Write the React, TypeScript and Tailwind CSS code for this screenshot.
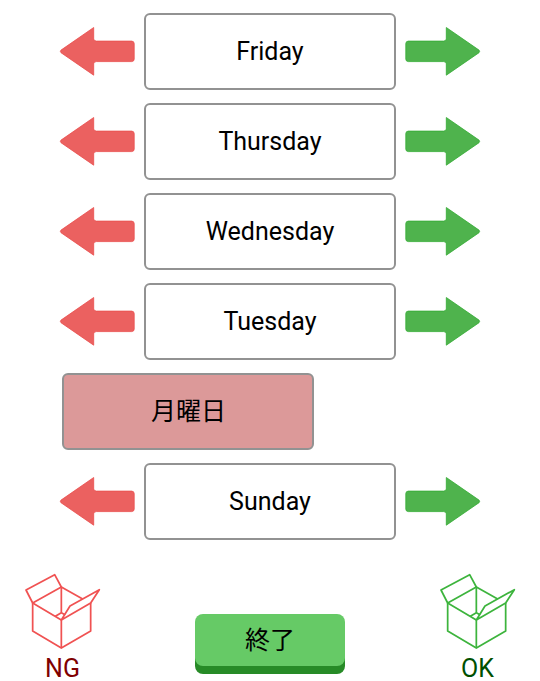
type Tone = 'ng' | 'ok';

const words = ['Friday', 'Thursday', 'Wednesday', 'Tuesday', '月曜日', 'Sunday'];
const swipedIndex = 4;

function Arrow({ tone }: { tone: Tone }) {
  const ng = tone === 'ng';
  return (
    <svg
      className={ng ? 'h-[51px] w-[76px]' : 'h-[51px] w-[76px] -scale-x-100'}
      viewBox="0 0 76 51"
      fill={ng ? '#eb6160' : '#4fb34d'}
      stroke={ng ? '#ea4e4d' : '#33ac33'}
      strokeWidth="0.8"
      strokeLinejoin="round"
    >
      <path d="M34.7 1.5V13Q34.9 15 37.4 15.1H72.7Q75.1 15.2 75.2 17.5V33.2Q75.1 35.5 72.7 35.6H37.4Q34.9 35.7 34.7 37.7V49.2L2 26.7Q0.7 25.4 2 24.1Z" />
    </svg>
  );
}

function Bin({ tone, label }: { tone: Tone; label: string }) {
  const ng = tone === 'ng';
  return (
    <div className="flex w-[100px] flex-col items-center">
      <svg
        className="h-[87px] w-[100px]"
        viewBox="0 0 300 261"
        fill="none"
        stroke={ng ? '#f05252' : '#3db43d'}
        strokeWidth="5.2"
        strokeLinejoin="round"
      >
        <path d="M53 114L33 75L119 29L139 66Z" />
        <path d="M139 165L165 123L253 74L227 114Z" />
        <path d="M53 114V198L139 249L227 198V114" />
        <path d="M53 114L139 165V249" />
        <path d="M203 102L139 66V143M121 154L139 143L150 149" />
      </svg>
      <span
        className={
          ng
            ? 'mt-1 mr-[5px] text-[25px] leading-[25px] text-[#800000]'
            : 'mt-1 mr-[5px] text-[25px] leading-[25px] text-[#005000]'
        }
      >
        {label}
      </span>
    </div>
  );
}

function Card({ text, swiped }: { text: string; swiped?: boolean }) {
  return (
    <div
      className={
        'flex h-[77px] w-[252px] items-center justify-center rounded-md border-2 border-[#929292] pb-px text-[25px] leading-none ' +
        (swiped ? 'bg-[#dc9999] pl-px' : 'bg-white')
      }
    >
      {text}
    </div>
  );
}

export default function App() {
  return (
    <main className="flex h-[681px] w-[540px] flex-col bg-white pt-[13px] font-['Roboto','Noto_Sans_CJK_JP',sans-serif] text-black">
      <div className="flex flex-col gap-[13px]">
        {words.map((word, i) =>
          i === swipedIndex ? (
            <div key={word} className="flex pl-[62px]">
              <Card text={word} swiped />
            </div>
          ) : (
            <div key={word} className="flex items-center justify-center gap-[9px]">
              <Arrow tone="ng" />
              <Card text={word} />
              <Arrow tone="ok" />
            </div>
          ),
        )}
      </div>
      <footer className="mt-[25px] flex justify-between pr-[10px] pl-[15px]">
        <Bin tone="ng" label="NG" />
        <button className="mt-[49px] ml-[-5px] flex h-[52px] w-[150px] items-center justify-center rounded-lg bg-[#66ca66] text-[25px] leading-none shadow-[0_8px_0_#278b27]">
          終了
        </button>
        <Bin tone="ok" label="OK" />
      </footer>
    </main>
  );
}
